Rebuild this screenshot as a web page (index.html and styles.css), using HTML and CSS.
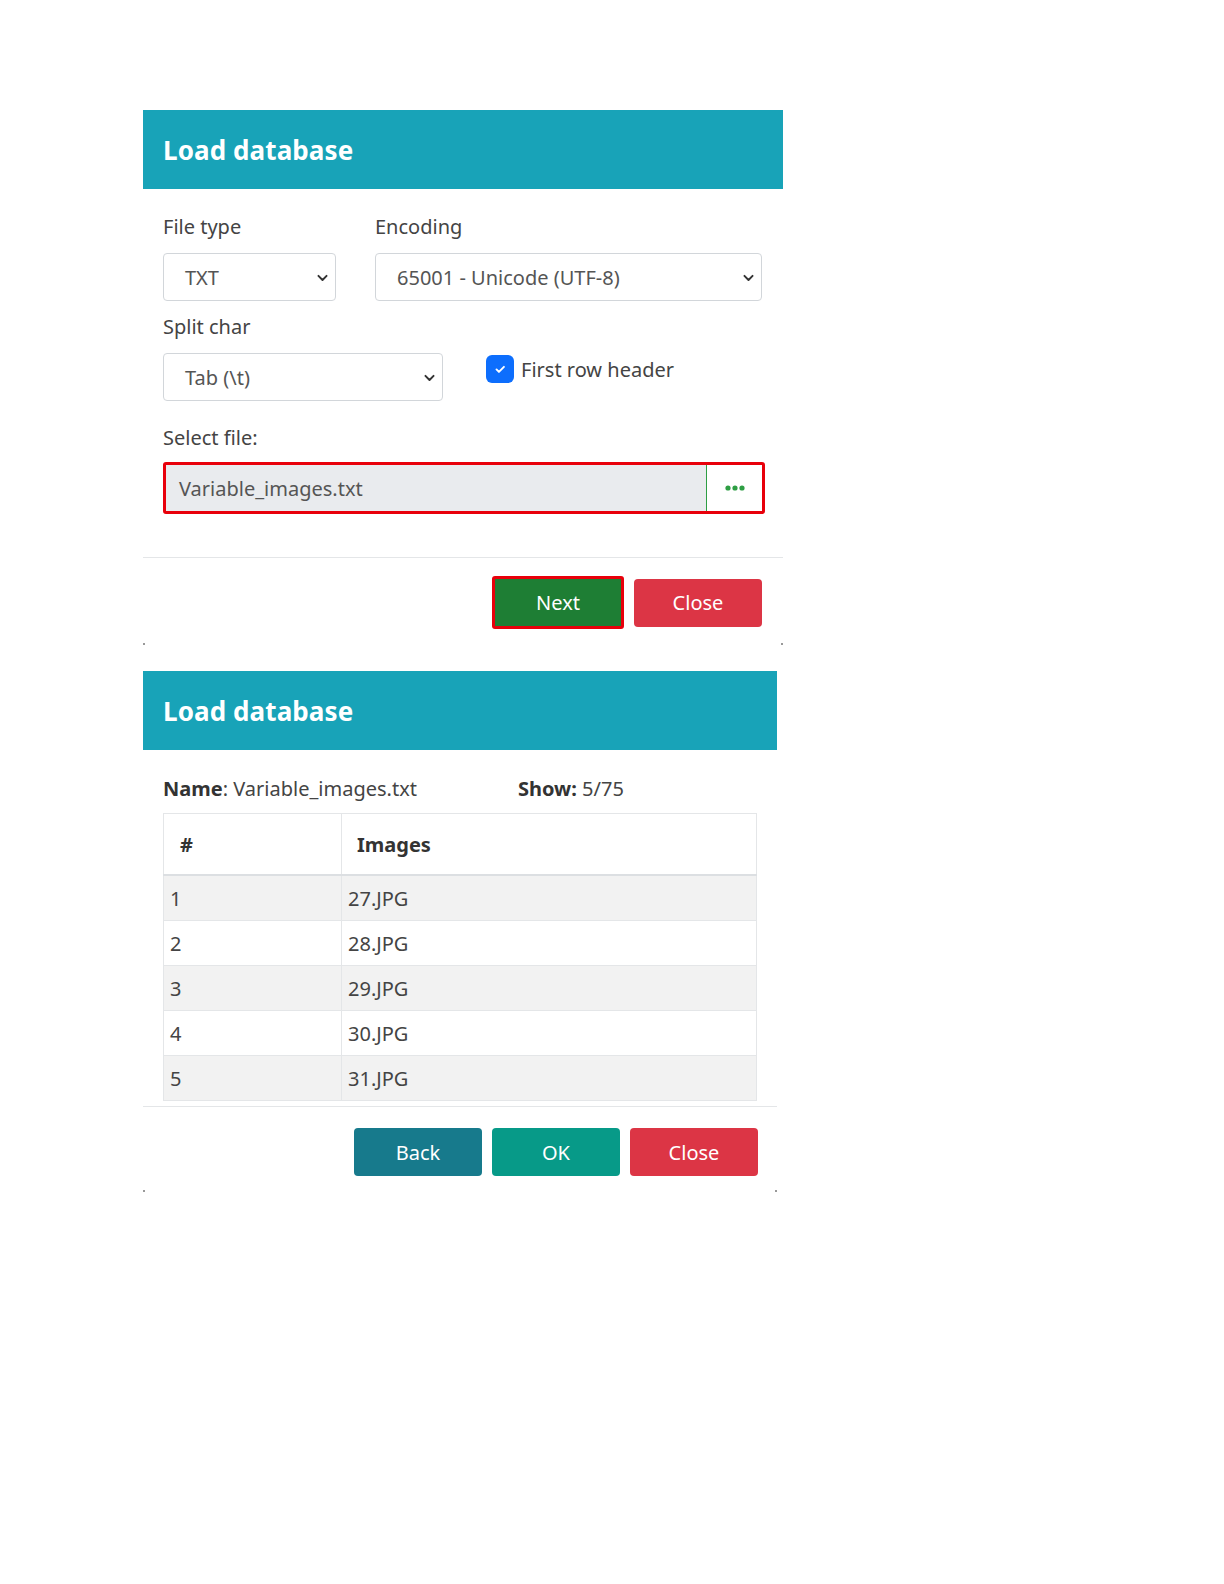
FILE: index.html
```html
<!DOCTYPE html>
<html lang="en">
<head>
    <meta charset="UTF-8" />
    <title>Load database</title>
    <link rel="stylesheet" href="styles.css">
</head>
<body>
    <div class="page">
        <section class="dialog step-one">
            <div class="dialog-header">
                <h2>Load database</h2>
            </div>
            <div class="dialog-body">
                <div class="form-row">
                    <div class="field">
                        <label>File type</label>
                        <div class="select w-type">
                            <span>TXT</span>
                            <svg width="13" height="13" viewBox="0 0 16 16"><path d="M3 6l5 5 5-5" fill="none" stroke="#333" stroke-width="2.4" stroke-linecap="round" stroke-linejoin="round"/></svg>
                        </div>
                    </div>
                    <div class="field">
                        <label>Encoding</label>
                        <div class="select w-enc">
                            <span>65001 - Unicode (UTF-8)</span>
                            <svg width="13" height="13" viewBox="0 0 16 16"><path d="M3 6l5 5 5-5" fill="none" stroke="#333" stroke-width="2.4" stroke-linecap="round" stroke-linejoin="round"/></svg>
                        </div>
                    </div>
                </div>
                <div class="form-row split-row">
                    <div class="field">
                        <label>Split char</label>
                        <div class="select w-split">
                            <span>Tab (\t)</span>
                            <svg width="13" height="13" viewBox="0 0 16 16"><path d="M3 6l5 5 5-5" fill="none" stroke="#333" stroke-width="2.4" stroke-linecap="round" stroke-linejoin="round"/></svg>
                        </div>
                    </div>
                    <div class="check">
                        <span class="check-box">
                            <svg width="14" height="14" viewBox="0 0 16 16"><path d="M4 8.5l2.8 2.8L12.5 5.5" fill="none" stroke="#fff" stroke-width="2.2" stroke-linecap="round" stroke-linejoin="round"/></svg>
                        </span>
                        <span>First row header</span>
                    </div>
                </div>
                <div class="file-field">
                    <label>Select file:</label>
                    <div class="file-group">
                        <div class="file-name">Variable_images.txt</div>
                        <div class="file-btn">
                            <svg width="22" height="8" viewBox="0 0 22 8"><circle cx="4" cy="4" r="2.6" fill="#2e9e44"/><circle cx="11" cy="4" r="2.6" fill="#2e9e44"/><circle cx="18" cy="4" r="2.6" fill="#2e9e44"/></svg>
                        </div>
                    </div>
                </div>
            </div>
            <div class="dialog-footer">
                <button class="btn btn-next">Next</button>
                <button class="btn btn-close">Close</button>
            </div>
            <div class="corners"><span></span><span></span></div>
        </section>

        <section class="dialog step-two">
            <div class="dialog-header">
                <h2>Load database</h2>
            </div>
            <div class="dialog-body preview">
                <div class="meta">
                    <div class="meta-name"><b>Name</b>: Variable_images.txt</div>
                    <div><b>Show:</b> 5/75</div>
                </div>
                <table class="grid">
                    <thead>
                        <tr><th class="col-num">#</th><th>Images</th></tr>
                    </thead>
                    <tbody>
                        <tr><td>1</td><td>27.JPG</td></tr>
                        <tr><td>2</td><td>28.JPG</td></tr>
                        <tr><td>3</td><td>29.JPG</td></tr>
                        <tr><td>4</td><td>30.JPG</td></tr>
                        <tr><td>5</td><td>31.JPG</td></tr>
                    </tbody>
                </table>
            </div>
            <div class="dialog-footer footer-two">
                <button class="btn btn-back">Back</button>
                <button class="btn btn-ok">OK</button>
                <button class="btn btn-close">Close</button>
            </div>
            <div class="corners"><span></span><span></span></div>
        </section>
    </div>
</body>
</html>
```

FILE: styles.css
```css
body {
    font-family: "Noto Sans", "Open Sans", sans-serif;
    background: #fff;
    margin: 0;
    color: #444;
}
.page {
    padding: 110px 0 0 143px;
}
.dialog {
    width: 640px;
    background: #fff;
}
.step-two {
    width: 634px;
    margin-top: 22px;
}
.dialog-header {
    background: #18a3b8;
    height: 79px;
    display: flex;
    align-items: center;
    padding: 0 20px;
}
.dialog-header h2 {
    margin: 0;
    color: #fff;
    font-size: 26px;
    font-weight: 700;
    letter-spacing: 0.1px;
}
.dialog-body {
    padding: 24px 20px 0 20px;
}
label {
    display: block;
    font-size: 20px;
    line-height: 27px;
    color: #444;
    margin-bottom: 13px;
}
.form-row {
    display: flex;
    gap: 39px;
}
.split-row {
    margin-top: 12px;
    gap: 43px;
}
.select {
    box-sizing: border-box;
    height: 48px;
    border: 1px solid #d2d6da;
    border-radius: 4px;
    padding: 0 6px 0 21px;
    display: flex;
    align-items: center;
    justify-content: space-between;
    font-size: 20px;
    color: #555;
}
.w-type { width: 173px; }
.w-enc { width: 387px; }
.w-split { width: 280px; }
.check {
    display: flex;
    align-items: center;
    gap: 7px;
    font-size: 20px;
    color: #444;
    margin-top: 42px;
    height: 28px;
}
.check-box {
    width: 28px;
    height: 28px;
    background: #0d6efd;
    border-radius: 6px;
    display: flex;
    align-items: center;
    justify-content: center;
}
.file-field {
    margin-top: 23px;
}
.file-field label {
    margin-bottom: 11px;
}
.file-group {
    box-sizing: border-box;
    width: 602px;
    height: 52px;
    border: 3px solid #e8000b;
    border-radius: 3px;
    display: flex;
}
.file-name {
    flex: 1;
    background: #e9ebee;
    display: flex;
    align-items: center;
    padding-left: 13px;
    font-size: 20px;
    color: #555;
}
.file-btn {
    width: 55px;
    border-left: 1px solid #2e9e44;
    background: #fff;
    display: flex;
    align-items: center;
    justify-content: center;
}
.dialog-footer {
    margin-top: 43px;
    border-top: 1px solid #e4e6e8;
    padding: 18px 21px 0 0;
    display: flex;
    justify-content: flex-end;
    align-items: center;
    gap: 10px;
    height: 53px;
}
.btn {
    box-sizing: border-box;
    width: 128px;
    height: 48px;
    border: none;
    border-radius: 4px;
    color: #fff;
    font-family: "Noto Sans", "Open Sans", sans-serif;
    font-size: 20px;
    cursor: pointer;
}
.btn-next {
    width: 132px;
    height: 53px;
    background: #1e7e34;
    border: 3px solid #e8000b;
    border-radius: 3px;
}
.btn-close {
    background: #dc3545;
}
.btn-back {
    background: #177a8c;
}
.btn-ok {
    background: #079a88;
}
.corners {
    display: flex;
    justify-content: space-between;
    height: 6px;
    margin-top: 14px;
}
.corners span {
    width: 2px;
    height: 2px;
    background: #999;
}
.preview {
    padding-top: 25px;
}
.meta {
    display: flex;
    font-size: 20px;
    line-height: 27px;
    color: #444;
    margin-bottom: 11px;
}
.meta b {
    color: #333;
    font-weight: 700;
}
.meta-name {
    width: 355px;
}
.grid {
    width: 594px;
    border-collapse: collapse;
    font-size: 20px;
    color: #444;
}
.grid th {
    text-align: left;
    font-weight: 700;
    color: #333;
    height: 60px;
    padding: 0 15px;
    border: 1px solid #e4e6e8;
    border-bottom: 2px solid #dcdfe2;
}
.grid th.col-num {
    width: 146px;
    padding-left: 16px;
}
.grid td {
    height: 44px;
    padding: 0 6px;
    border: 1px solid #e4e6e8;
}
.grid tbody tr:nth-child(odd) td {
    background: #f2f2f2;
}
.footer-two {
    margin-top: 5px;
    height: 48px;
    padding-top: 21px;
    padding-right: 19px;
}
```
